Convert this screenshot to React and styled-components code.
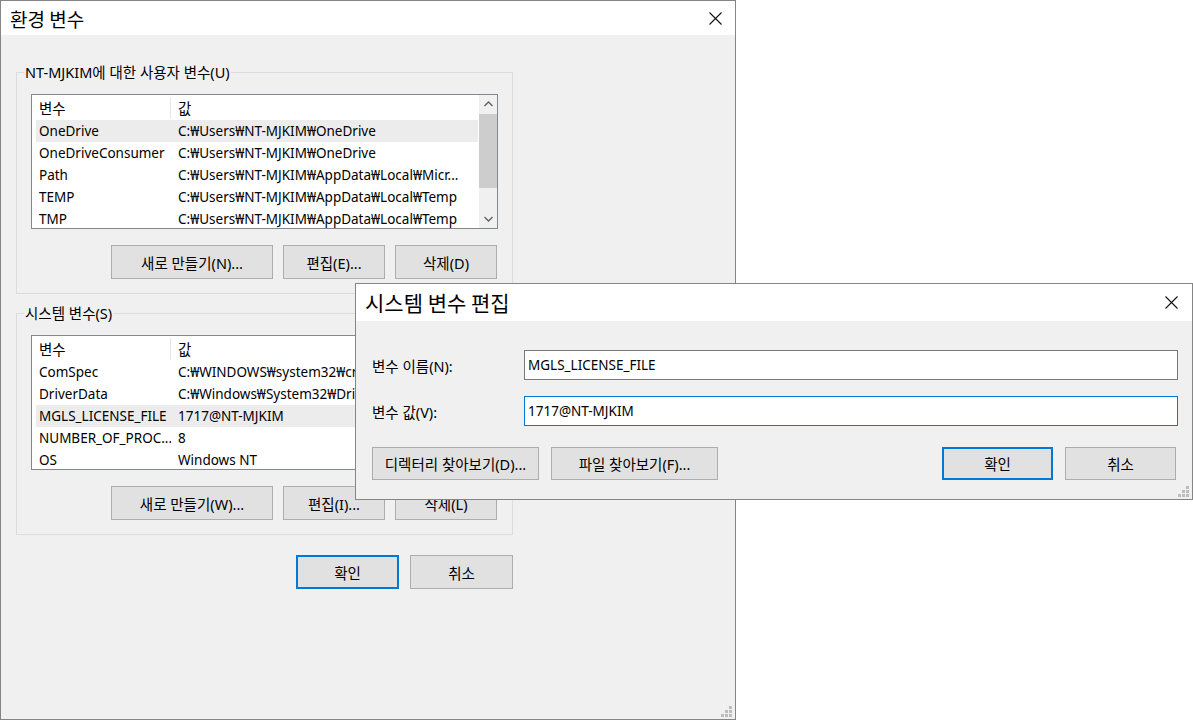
import React from 'react';
import styled, { createGlobalStyle } from 'styled-components';

const GlobalStyle = createGlobalStyle`
  html, body {
    margin: 0;
    padding: 0;
    background: #ffffff;
  }
  body {
    font-family: "Noto Sans", "Noto Sans CJK KR", sans-serif;
    font-size: 13.5px;
    color: #000000;
  }
  * {
    box-sizing: border-box;
  }
`;

const Desktop = styled.div`
  position: relative;
  width: 1193px;
  height: 720px;
  overflow: hidden;
  background: #ffffff;
`;

// windows sit on a free canvas, so their place is absolute
const Window = styled.div`
  position: absolute;
  left: ${(p) => p.$x}px;
  top: ${(p) => p.$y}px;
  width: ${(p) => p.$w}px;
  height: ${(p) => p.$h}px;
  display: flex;
  flex-direction: column;
  background: #f0f0f0;
  border: 1px solid #858585;
`;

const TitleBar = styled.div`
  height: ${(p) => p.$h}px;
  flex: none;
  display: flex;
  align-items: center;
  justify-content: space-between;
  background: #ffffff;
  padding: 0 ${(p) => p.$pr}px 0 ${(p) => p.$pl}px;
`;

const Title = styled.span`
  font-family: "Noto Sans CJK KR", sans-serif;
  font-size: ${(p) => p.$size}px;
  line-height: 1;
`;

const CloseButton = styled.span`
  display: flex;
  align-items: center;
  justify-content: center;
  width: 14px;
  height: 14px;
`;

const MainBody = styled.div`
  flex: 1;
  display: flex;
  flex-direction: column;
  gap: 19px;
  padding: 37px 0 0 15px;
`;

const Group = styled.div`
  position: relative;
  width: 497px;
  height: 222px;
  border: 1px solid #dcdcdc;
  padding: 21px 14px 0 14px;
  display: flex;
  flex-direction: column;
  gap: 16px;
`;

const GroupLabel = styled.span`
  position: absolute;
  top: -11px;
  left: 7px;
  padding: 0 1px;
  background: #f0f0f0;
  font-size: 14.5px;
  line-height: 20px;
`;

const List = styled.div`
  height: 135px;
  border: 1px solid #828790;
  background: #ffffff;
  display: flex;
  overflow: hidden;
`;

const ListContent = styled.div`
  flex: 1;
  padding: 0 1px 0 4px;
  display: flex;
  flex-direction: column;
  overflow: hidden;
`;

const HeaderRow = styled.div`
  height: 25px;
  flex: none;
  display: grid;
  grid-template-columns: 135px 1fr;
  align-items: center;
  font-size: 14.5px;
`;

const HeaderCell = styled.span`
  height: 22px;
  display: flex;
  align-items: center;
  padding-left: ${(p) => (p.$first ? 3 : 7)}px;
  border-right: ${(p) => (p.$first ? '1px solid #e5e5e5' : 'none')};
`;

const Row = styled.div`
  height: 22px;
  flex: none;
  display: grid;
  grid-template-columns: 135px 1fr;
  align-items: center;
  background: ${(p) => (p.$selected ? '#ececec' : 'transparent')};
`;

const Cell = styled.span`
  padding-left: ${(p) => (p.$first ? 3 : 7)}px;
  white-space: nowrap;
  overflow: hidden;
`;

const ScrollBar = styled.div`
  width: 18px;
  flex: none;
  background: #f0f0f0;
  display: flex;
  flex-direction: column;
  align-items: center;
`;

const ScrollArrow = styled.div`
  height: 18px;
  width: 100%;
  flex: none;
  display: flex;
  align-items: center;
  justify-content: center;
`;

const ScrollTrack = styled.div`
  flex: 1;
  width: 100%;
  padding-top: 1px;
`;

const Thumb = styled.div`
  height: 74px;
  width: 100%;
  background: #cdcdcd;
`;

const ButtonRow = styled.div`
  display: flex;
  align-items: center;
  justify-content: flex-end;
  gap: ${(p) => p.$gap || 10}px;
  padding-right: ${(p) => p.$pr || 0}px;
  margin-top: ${(p) => p.$mt || 0}px;
`;

const Button = styled.div`
  width: ${(p) => p.$w}px;
  height: ${(p) => p.$h || 34}px;
  flex: none;
  display: flex;
  align-items: center;
  justify-content: center;
  background: #e1e1e1;
  border: ${(p) => (p.$default ? '2px solid #0078d7' : '1px solid #adadad')};
  font-size: 14.5px;
  white-space: nowrap;
`;

const Spacer = styled.div`
  flex: 1;
`;

const EditBody = styled.div`
  flex: 1;
  display: flex;
  flex-direction: column;
  padding: 29px 14px 0 16px;
`;

const FieldRow = styled.div`
  display: flex;
  align-items: center;
  margin-bottom: 16px;
`;

const FieldLabel = styled.span`
  width: 152px;
  flex: none;
  font-size: 14.5px;
`;

const Input = styled.div`
  flex: 1;
  height: 30px;
  display: flex;
  align-items: center;
  padding-left: 3px;
  background: #ffffff;
  border: 1px solid ${(p) => (p.$focused ? '#0078d7' : '#7a7a7a')};
`;

const Grip = styled.svg`
  position: absolute;
  right: 3px;
  bottom: 2px;
`;

const CloseIcon = () => (
  <svg width="13" height="13" viewBox="0 0 13 13">
    <path d="M0.5 0.5 L12.5 12.5 M12.5 0.5 L0.5 12.5" stroke="#111" strokeWidth="1.1" fill="none" />
  </svg>
);

const ResizeGrip = () => (
  <Grip width="11" height="11" viewBox="0 0 11 11">
    {[[8, 0], [4, 4], [8, 4], [0, 8], [4, 8], [8, 8]].map(([x, y]) => (
      <rect key={`${x}-${y}`} x={x} y={y} width="3" height="3" fill="#bdbdbd" />
    ))}
  </Grip>
);

const Chevron = ({ up }) => (
  <svg width="9" height="6" viewBox="0 0 9 6">
    <path d={up ? 'M0.5 5 L4.5 1 L8.5 5' : 'M0.5 1 L4.5 5 L8.5 1'} stroke="#606060" strokeWidth="1.3" fill="none" />
  </svg>
);

const userVars = [
  ['OneDrive', 'C:₩Users₩NT-MJKIM₩OneDrive'],
  ['OneDriveConsumer', 'C:₩Users₩NT-MJKIM₩OneDrive'],
  ['Path', 'C:₩Users₩NT-MJKIM₩AppData₩Local₩Micr...'],
  ['TEMP', 'C:₩Users₩NT-MJKIM₩AppData₩Local₩Temp'],
  ['TMP', 'C:₩Users₩NT-MJKIM₩AppData₩Local₩Temp'],
];

const systemVars = [
  ['ComSpec', 'C:₩WINDOWS₩system32₩cmd.exe'],
  ['DriverData', 'C:₩Windows₩System32₩Drivers₩DriverData'],
  ['MGLS_LICENSE_FILE', '1717@NT-MJKIM'],
  ['NUMBER_OF_PROC...', '8'],
  ['OS', 'Windows NT'],
];

const VarList = ({ rows, selected }) => (
  <List>
    <ListContent>
      <HeaderRow>
        <HeaderCell $first>변수</HeaderCell>
        <HeaderCell>값</HeaderCell>
      </HeaderRow>
      {rows.map(([name, value], i) => (
        <Row key={name} $selected={i === selected}>
          <Cell $first>{name}</Cell>
          <Cell>{value}</Cell>
        </Row>
      ))}
    </ListContent>
    <ScrollBar>
      <ScrollArrow><Chevron up /></ScrollArrow>
      <ScrollTrack><Thumb /></ScrollTrack>
      <ScrollArrow><Chevron /></ScrollArrow>
    </ScrollBar>
  </List>
);

const VarGroup = ({ label, rows, selected, keys }) => (
  <Group>
    <GroupLabel>{label}</GroupLabel>
    <VarList rows={rows} selected={selected} />
    <ButtonRow $pr={1}>
      <Button $w={162}>새로 만들기({keys[0]})...</Button>
      <Button $w={102}>편집({keys[1]})...</Button>
      <Button $w={102}>삭제({keys[2]})</Button>
    </ButtonRow>
  </Group>
);

export default function App() {
  return (
    <Desktop>
      <GlobalStyle />
      <Window $x={0} $y={0} $w={736} $h={720}>
        <TitleBar $h={34} $pl={9} $pr={13}>
          <Title $size={19}>환경 변수</Title>
          <CloseButton><CloseIcon /></CloseButton>
        </TitleBar>
        <MainBody>
          <VarGroup label="NT-MJKIM에 대한 사용자 변수(U)" rows={userVars} selected={0} keys={['N', 'E', 'D']} />
          <VarGroup label="시스템 변수(S)" rows={systemVars} selected={2} keys={['W', 'I', 'L']} />
          <ButtonRow $gap={11} $pr={222} $mt={1}>
            <Button $w={103} $default>확인</Button>
            <Button $w={103}>취소</Button>
          </ButtonRow>
        </MainBody>
        <ResizeGrip />
      </Window>

      <Window $x={355} $y={283} $w={838} $h={217}>
        <TitleBar $h={37} $pl={9} $pr={14}>
          <Title $size={21}>시스템 변수 편집</Title>
          <CloseButton><CloseIcon /></CloseButton>
        </TitleBar>
        <EditBody>
          <FieldRow>
            <FieldLabel>변수 이름(N):</FieldLabel>
            <Input>MGLS_LICENSE_FILE</Input>
          </FieldRow>
          <FieldRow>
            <FieldLabel>변수 값(V):</FieldLabel>
            <Input $focused>1717@NT-MJKIM</Input>
          </FieldRow>
          <ButtonRow $gap={12} $pr={2} $mt={5}>
            <Button $w={167} $h={33}>디렉터리 찾아보기(D)...</Button>
            <Button $w={167} $h={33}>파일 찾아보기(F)...</Button>
            <Spacer />
            <Button $w={111} $h={33} $default>확인</Button>
            <Button $w={111} $h={33}>취소</Button>
          </ButtonRow>
        </EditBody>
        <ResizeGrip />
      </Window>
    </Desktop>
  );
}
